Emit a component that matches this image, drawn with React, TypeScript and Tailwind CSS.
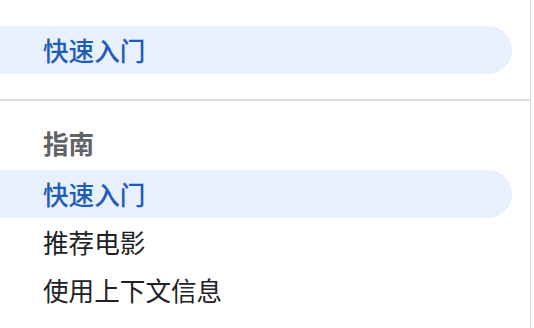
const font = { fontFamily: '"Noto Sans CJK SC", "Noto Sans", sans-serif' };

function NavItem({ label, active = false }: { label: string; active?: boolean }) {
  return (
    <div
      className={`flex h-12 items-center rounded-r-full pl-[43px] text-[25.6px] leading-none ${
        active ? "bg-[#e8f0fe] font-medium text-[#1f5bb8]" : "text-[#202124]"
      }`}
    >
      {label}
    </div>
  );
}

export default function App() {
  return (
    <div className="h-[328px] w-[534px] overflow-hidden bg-white" style={font}>
      <div className="h-full w-[531px] border-r border-[#dadce0]">
        {/* top section */}
        <div className="pr-[18px] pt-[26px]">
          <NavItem label="快速入门" active />
        </div>
        <div className="mt-[25px] border-t-2 border-[#dadce0]" />

        {/* guide section */}
        <div className="pr-[18px] pt-[19px]">
          <div className="flex h-[48px] items-center pb-[3px] pl-[43px] text-[25.6px] font-bold leading-none text-[#5f6368]">
            指南
          </div>
          <div className="mt-[2px]">
            <NavItem label="快速入门" active />
          </div>
          <NavItem label="推荐电影" />
          <NavItem label="使用上下文信息" />
        </div>
      </div>
    </div>
  );
}
